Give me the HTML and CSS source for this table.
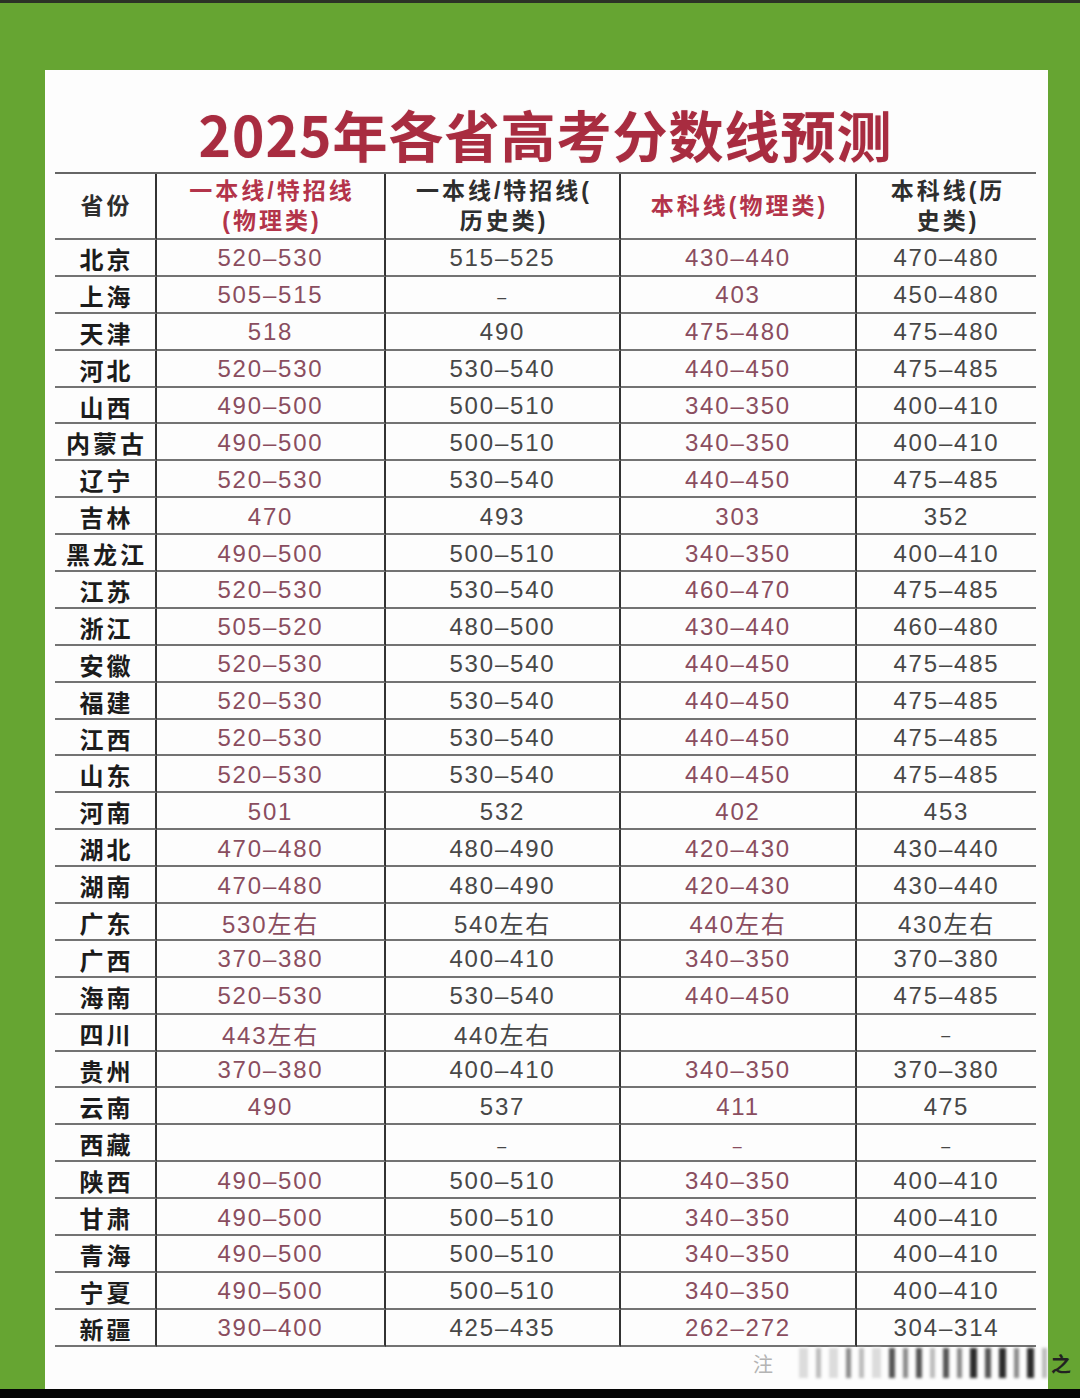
FILE: index.html
```html
<!DOCTYPE html>
<html lang="zh-CN">
<head>
<meta charset="utf-8">
<title>2025年各省高考分数线预测</title>
<link rel="stylesheet" href="styles.css">
</head>
<body>
<div class="topbar"></div>
<div class="stage">
  <div class="card">
    <h1 class="title">2025年各省高考分数线预测</h1>
    <div class="grid">
      <div class="c h">省份</div>
      <div class="c h red">一本线/特招线<br>(物理类)</div>
      <div class="c h">一本线/特招线(<br>历史类)</div>
      <div class="c h red">本科线(物理类)</div>
      <div class="c h last">本科线(历<br>史类)</div>

      <div class="c p">北京</div><div class="c r">520–530</div><div class="c d">515–525</div><div class="c r">430–440</div><div class="c d last">470–480</div>
      <div class="c p">上海</div><div class="c r">505–515</div><div class="c d dash">–</div><div class="c r">403</div><div class="c d last">450–480</div>
      <div class="c p">天津</div><div class="c r">518</div><div class="c d">490</div><div class="c r">475–480</div><div class="c d last">475–480</div>
      <div class="c p">河北</div><div class="c r">520–530</div><div class="c d">530–540</div><div class="c r">440–450</div><div class="c d last">475–485</div>
      <div class="c p">山西</div><div class="c r">490–500</div><div class="c d">500–510</div><div class="c r">340–350</div><div class="c d last">400–410</div>
      <div class="c p">内蒙古</div><div class="c r">490–500</div><div class="c d">500–510</div><div class="c r">340–350</div><div class="c d last">400–410</div>
      <div class="c p">辽宁</div><div class="c r">520–530</div><div class="c d">530–540</div><div class="c r">440–450</div><div class="c d last">475–485</div>
      <div class="c p">吉林</div><div class="c r">470</div><div class="c d">493</div><div class="c r">303</div><div class="c d last">352</div>
      <div class="c p">黑龙江</div><div class="c r">490–500</div><div class="c d">500–510</div><div class="c r">340–350</div><div class="c d last">400–410</div>
      <div class="c p">江苏</div><div class="c r">520–530</div><div class="c d">530–540</div><div class="c r">460–470</div><div class="c d last">475–485</div>
      <div class="c p">浙江</div><div class="c r">505–520</div><div class="c d">480–500</div><div class="c r">430–440</div><div class="c d last">460–480</div>
      <div class="c p">安徽</div><div class="c r">520–530</div><div class="c d">530–540</div><div class="c r">440–450</div><div class="c d last">475–485</div>
      <div class="c p">福建</div><div class="c r">520–530</div><div class="c d">530–540</div><div class="c r">440–450</div><div class="c d last">475–485</div>
      <div class="c p">江西</div><div class="c r">520–530</div><div class="c d">530–540</div><div class="c r">440–450</div><div class="c d last">475–485</div>
      <div class="c p">山东</div><div class="c r">520–530</div><div class="c d">530–540</div><div class="c r">440–450</div><div class="c d last">475–485</div>
      <div class="c p">河南</div><div class="c r">501</div><div class="c d">532</div><div class="c r">402</div><div class="c d last">453</div>
      <div class="c p">湖北</div><div class="c r">470–480</div><div class="c d">480–490</div><div class="c r">420–430</div><div class="c d last">430–440</div>
      <div class="c p">湖南</div><div class="c r">470–480</div><div class="c d">480–490</div><div class="c r">420–430</div><div class="c d last">430–440</div>
      <div class="c p">广东</div><div class="c r">530左右</div><div class="c d">540左右</div><div class="c r">440左右</div><div class="c d last">430左右</div>
      <div class="c p">广西</div><div class="c r">370–380</div><div class="c d">400–410</div><div class="c r">340–350</div><div class="c d last">370–380</div>
      <div class="c p">海南</div><div class="c r">520–530</div><div class="c d">530–540</div><div class="c r">440–450</div><div class="c d last">475–485</div>
      <div class="c p">四川</div><div class="c r">443左右</div><div class="c d">440左右</div><div class="c r"></div><div class="c d last dash">–</div>
      <div class="c p">贵州</div><div class="c r">370–380</div><div class="c d">400–410</div><div class="c r">340–350</div><div class="c d last">370–380</div>
      <div class="c p">云南</div><div class="c r">490</div><div class="c d">537</div><div class="c r">411</div><div class="c d last">475</div>
      <div class="c p">西藏</div><div class="c r"></div><div class="c d dash">–</div><div class="c r dash">–</div><div class="c d last dash">–</div>
      <div class="c p">陕西</div><div class="c r">490–500</div><div class="c d">500–510</div><div class="c r">340–350</div><div class="c d last">400–410</div>
      <div class="c p">甘肃</div><div class="c r">490–500</div><div class="c d">500–510</div><div class="c r">340–350</div><div class="c d last">400–410</div>
      <div class="c p">青海</div><div class="c r">490–500</div><div class="c d">500–510</div><div class="c r">340–350</div><div class="c d last">400–410</div>
      <div class="c p">宁夏</div><div class="c r">490–500</div><div class="c d">500–510</div><div class="c r">340–350</div><div class="c d last">400–410</div>
      <div class="c p">新疆</div><div class="c r">390–400</div><div class="c d">425–435</div><div class="c r">262–272</div><div class="c d last">304–314</div>
    </div>
    <div class="note">
      <span class="note-mark">注</span>
      <div class="bars">
        <i class="b1"></i><i class="b2"></i><i class="b1"></i><i class="b3"></i><i class="b2"></i><i class="b1"></i><i class="b4"></i><i class="b3"></i><i class="b4"></i><i class="b2"></i><i class="b4"></i><i class="b3"></i><i class="b5"></i><i class="b4"></i><i class="b5"></i><i class="b3"></i><i class="b5"></i><i class="b2"></i>
      </div>
      <span class="note-end">之</span>
    </div>
  </div>
</div>
<div class="bottombar"></div>
</body>
</html>
```
FILE: styles.css
```css
* { box-sizing: border-box; }
html, body { margin: 0; padding: 0; }
body {
  width: 1080px;
  height: 1398px;
  overflow: hidden;
  background: #66a532;
  font-family: "Liberation Sans", "Noto Sans CJK SC", sans-serif;
}
.topbar { height: 3px; background: #2b3326; }
.stage {
  height: 1386px;
  padding: 67px 32px 0 45px;
  background: #66a532;
}
.card {
  position: relative;
  height: 1319px;
  background: #fdfdfd;
  padding: 0 12px 0 10px;
}
.title {
  margin: 0;
  height: 102px;
  padding-top: 31px;
  text-align: center;
  font-family: "Noto Sans CJK SC", sans-serif;
  font-size: 55px;
  line-height: 64px;
  font-weight: 700;
  letter-spacing: 1px;
  color: #a82c40;
  text-shadow: 0 0 1px rgba(168, 44, 64, 0.4);
}
.grid {
  display: grid;
  grid-template-columns: 102px 229px 235px 236px 179px;
  grid-template-rows: 66px repeat(30, 36.9px);
  border-top: 2px solid #666;
}
.c {
  display: flex;
  align-items: center;
  justify-content: center;
  text-align: center;
  border-bottom: 2px solid #737373;
  border-right: 2px solid #333;
  white-space: nowrap;
}
.c.last { border-right: none; }
.h {
  font-family: "Liberation Sans", "Noto Sans CJK SC", sans-serif;
  font-size: 23px;
  line-height: 30px;
  font-weight: 700;
  letter-spacing: 3px;
  color: #2e2e2e;
  padding-left: 3px;
}
.h.red { color: #b3344a; }
.p {
  font-family: "Noto Sans CJK SC", sans-serif;
  font-size: 24px;
  font-weight: 700;
  letter-spacing: 3px;
  color: #1c1c1c;
  padding-top: 2px;
  padding-left: 3px;
}
.r, .d {
  font-family: "Liberation Sans", "Noto Sans CJK SC", sans-serif;
  font-size: 24px;
  letter-spacing: 1.8px;
  padding-top: 2px;
}
.r { color: #8a4d5f; }
.d { color: #474747; }
.dash { font-size: 16px; padding-top: 8px; }
.note {
  position: absolute;
  left: 700px;
  top: 1276px;
  width: 320px;
  height: 34px;
  display: flex;
  align-items: center;
}
.note-mark {
  font-family: "Noto Sans CJK SC", sans-serif;
  font-size: 20px;
  color: #b4b4b4;
  margin-left: 8px;
}
.bars {
  display: flex;
  align-items: stretch;
  gap: 8px;
  height: 30px;
  margin-left: 26px;
  filter: blur(1.5px);
}
.bars i { display: block; width: 5px; }
.b1 { background: #dcdcdc; width: 9px !important; }
.b2 { background: #bcbcbc; }
.b3 { background: #8a8a8a; }
.b4 { background: #555; width: 6px !important; }
.b5 { background: #2c2c2c; width: 7px !important; }
.note-end {
  font-family: "Noto Sans CJK SC", sans-serif;
  font-size: 20px;
  font-weight: 700;
  color: #222;
  margin-left: 4px;
}
.bottombar { height: 9px; background: #050505; }
```
